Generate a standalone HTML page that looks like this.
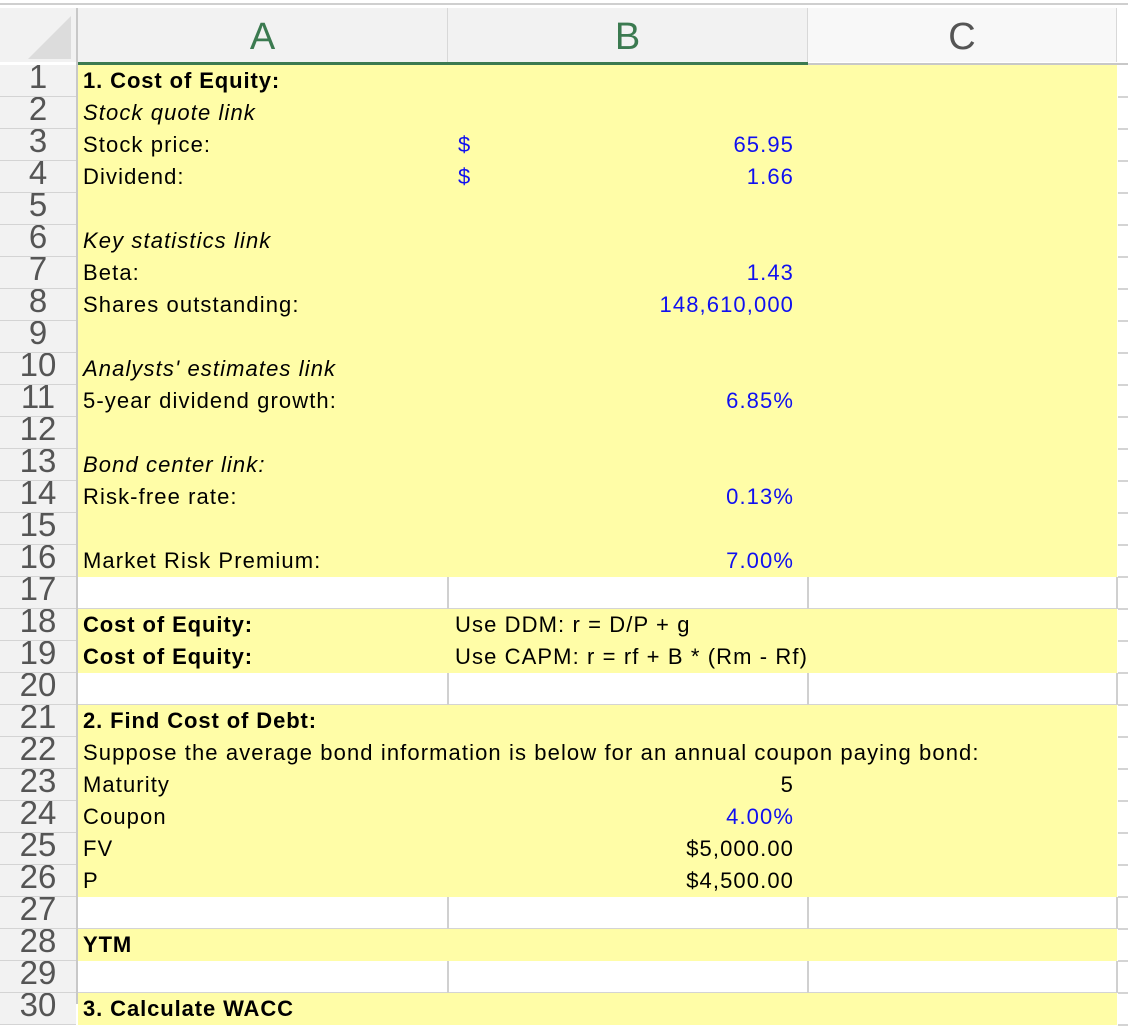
<!DOCTYPE html>
<html><head><meta charset="utf-8"><style>
body{margin:0;width:1128px;height:1004px;overflow:hidden;background:#fff;font-family:"Liberation Sans",Arial,sans-serif;position:relative}
.a{position:absolute}
.hdr{top:8px;height:54px;background:#f2f2f2;border-right:1px solid #d8d8d8;color:#3b7a50;font-size:38px;text-align:center;line-height:58px}
.rn{left:0;width:76px;height:32px;line-height:24px;overflow:hidden;background:#f2f2f2;color:#555;font-size:33px;text-align:center;border-bottom:1px solid #d4d4d4;box-sizing:border-box}
.row{left:78px;width:1039px;height:32px;box-sizing:border-box}
.y{background:#fffda7}
.w{background:#fff;border-bottom:1px solid #d4d4d4}
.t{font-size:22px;letter-spacing:1.1px;line-height:32px;height:32px;white-space:nowrap;color:#000}
.b{font-weight:bold;letter-spacing:0.9px}.i{font-style:italic}
.blue{color:#1010f0}
.r{right:334px;text-align:right}
.vl{width:2px;background:#d0d0d0;height:32px}
</style></head><body>
<div class="a" style="left:0;top:0;width:1128px;height:8px;background:#fff"></div>
<div class="a" style="left:0;top:3px;width:1128px;height:2px;background:#cfcfcf"></div>
<div class="a" style="left:0;top:8px;width:76px;height:54px;background:#f2f2f2"></div>
<svg class="a" style="left:28px;top:16px" width="45" height="44"><polygon points="43,0 43,43 0,43" fill="#dcdcdc"/></svg>
<div class="a hdr" style="left:78px;width:369px;">A</div>
<div class="a hdr" style="left:448px;width:359px;">B</div>
<div class="a hdr" style="left:808px;width:308px;background:#f8f8f8;color:#555">C</div>
<div class="a" style="left:78px;top:62px;width:730px;height:3px;background:#3b7a50"></div>
<div class="a" style="left:808px;top:63px;width:320px;height:2px;background:#c8c8c8"></div>
<div class="a" style="left:1118px;top:65px;width:10px;height:940px;background:#fff"></div>
<div id="rows"></div>
<div class="a" style="left:76px;top:8px;width:2px;height:996px;background:#c8c8c8"></div>
<script>
var Y=[1,2,3,4,5,6,7,8,9,10,11,12,13,14,15,16,18,19,21,22,23,24,25,26,28,30];
var h='';
for(var n=1;n<=30;n++){var tp=65+(n-1)*32;
h+='<div class="a rn" style="top:'+tp+'px">'+n+'</div>';
var yy=Y.indexOf(n)>=0;
h+='<div class="a row '+(yy?'y':'w')+'" style="top:'+tp+'px"></div>';
if(!yy){h+='<div class="a vl" style="left:447px;top:'+tp+'px"></div><div class="a vl" style="left:807px;top:'+tp+'px"></div><div class="a vl" style="left:1116px;top:'+tp+'px"></div>';}
h+='<div class="a" style="left:1118px;top:'+(tp+31)+'px;width:10px;height:2px;background:#d4d4d4"></div>';
}
function L(n,t,c,x){x=x||83;h+='<div class="a t '+(c||'')+'" style="left:'+x+'px;top:'+(65+(n-1)*32)+'px">'+t+'</div>';}
function R(n,t,c){h+='<div class="a t r '+(c||'')+'" style="top:'+(65+(n-1)*32)+'px">'+t+'</div>';}
L(1,'1. Cost of Equity:','b');L(2,'Stock quote link','i');L(3,'Stock price:');L(4,'Dividend:');
L(3,'$','blue',458);L(4,'$','blue',458);R(3,'65.95','blue');R(4,'1.66','blue');
L(6,'Key statistics link','i');L(7,'Beta:');L(8,'Shares outstanding:');R(7,'1.43','blue');R(8,'148,610,000','blue');
L(10,"Analysts' estimates link",'i');L(11,'5-year dividend growth:');R(11,'6.85%','blue');
L(13,'Bond center link:','i');L(14,'Risk-free rate:');R(14,'0.13%','blue');
L(16,'Market Risk Premium:');R(16,'7.00%','blue');
L(18,'Cost of Equity:','b');L(19,'Cost of Equity:','b');
L(18,'Use DDM: r = D/P + g','',455);L(19,'Use CAPM: r = rf + B * (Rm - Rf)','',455);
L(21,'2. Find Cost of Debt:','b');L(22,'Suppose the average bond information is below for an annual coupon paying bond:');
L(23,'Maturity');L(24,'Coupon');L(25,'FV');L(26,'P');
R(23,'5');R(24,'4.00%','blue');R(25,'$5,000.00');R(26,'$4,500.00');
L(28,'YTM','b');L(30,'3. Calculate WACC','b');
document.getElementById('rows').innerHTML=h;
</script>
</body></html>
